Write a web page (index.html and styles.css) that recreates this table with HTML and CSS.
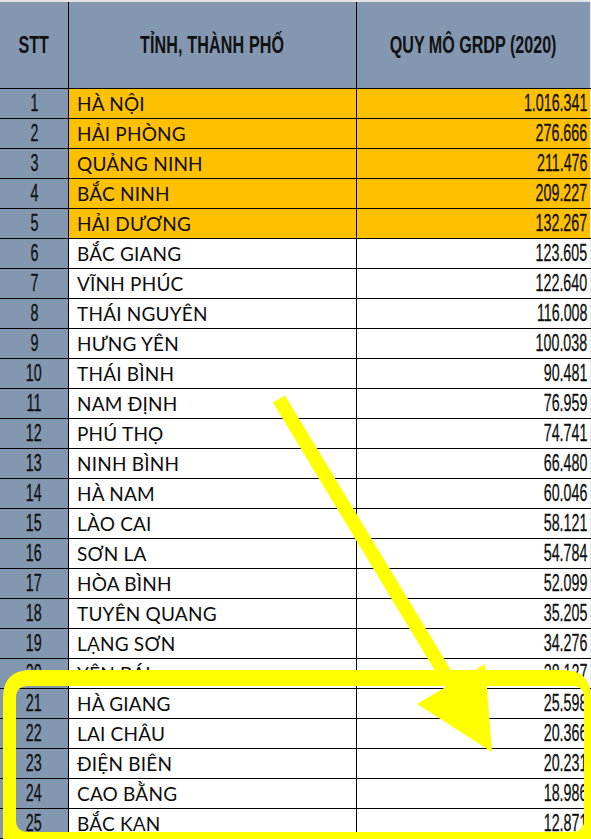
FILE: index.html
```html
<!DOCTYPE html>
<html lang="vi">
<head>
<meta charset="utf-8">
<title>Quy mô GRDP 2020</title>
<link rel="stylesheet" href="styles.css">
</head>
<body>
<div class="page">
  <div class="sheet">
    <div class="row head">
      <div class="cell stt"><span class="hd">STT</span></div>
      <div class="cell name c"><span class="hd">TỈNH, THÀNH PHỐ</span></div>
      <div class="cell val c"><span class="hd">QUY MÔ GRDP (2020)</span></div>
    </div>
    <div class="row hi"><div class="cell stt"><span class="num">1</span></div><div class="cell name">HÀ NỘI</div><div class="cell val"><span class="num r">1.016.341</span></div></div>
    <div class="row hi"><div class="cell stt"><span class="num">2</span></div><div class="cell name">HẢI PHÒNG</div><div class="cell val"><span class="num r">276.666</span></div></div>
    <div class="row hi"><div class="cell stt"><span class="num">3</span></div><div class="cell name">QUẢNG NINH</div><div class="cell val"><span class="num r">211.476</span></div></div>
    <div class="row hi"><div class="cell stt"><span class="num">4</span></div><div class="cell name">BẮC NINH</div><div class="cell val"><span class="num r">209.227</span></div></div>
    <div class="row hi"><div class="cell stt"><span class="num">5</span></div><div class="cell name">HẢI DƯƠNG</div><div class="cell val"><span class="num r">132.267</span></div></div>
    <div class="row"><div class="cell stt"><span class="num">6</span></div><div class="cell name">BẮC GIANG</div><div class="cell val"><span class="num r">123.605</span></div></div>
    <div class="row"><div class="cell stt"><span class="num">7</span></div><div class="cell name">VĨNH PHÚC</div><div class="cell val"><span class="num r">122.640</span></div></div>
    <div class="row"><div class="cell stt"><span class="num">8</span></div><div class="cell name">THÁI NGUYÊN</div><div class="cell val"><span class="num r">116.008</span></div></div>
    <div class="row"><div class="cell stt"><span class="num">9</span></div><div class="cell name">HƯNG YÊN</div><div class="cell val"><span class="num r">100.038</span></div></div>
    <div class="row"><div class="cell stt"><span class="num">10</span></div><div class="cell name">THÁI BÌNH</div><div class="cell val"><span class="num r">90.481</span></div></div>
    <div class="row"><div class="cell stt"><span class="num">11</span></div><div class="cell name">NAM ĐỊNH</div><div class="cell val"><span class="num r">76.959</span></div></div>
    <div class="row"><div class="cell stt"><span class="num">12</span></div><div class="cell name">PHÚ THỌ</div><div class="cell val"><span class="num r">74.741</span></div></div>
    <div class="row"><div class="cell stt"><span class="num">13</span></div><div class="cell name">NINH BÌNH</div><div class="cell val"><span class="num r">66.480</span></div></div>
    <div class="row"><div class="cell stt"><span class="num">14</span></div><div class="cell name">HÀ NAM</div><div class="cell val"><span class="num r">60.046</span></div></div>
    <div class="row"><div class="cell stt"><span class="num">15</span></div><div class="cell name">LÀO CAI</div><div class="cell val"><span class="num r">58.121</span></div></div>
    <div class="row"><div class="cell stt"><span class="num">16</span></div><div class="cell name">SƠN LA</div><div class="cell val"><span class="num r">54.784</span></div></div>
    <div class="row"><div class="cell stt"><span class="num">17</span></div><div class="cell name">HÒA BÌNH</div><div class="cell val"><span class="num r">52.099</span></div></div>
    <div class="row"><div class="cell stt"><span class="num">18</span></div><div class="cell name">TUYÊN QUANG</div><div class="cell val"><span class="num r">35.205</span></div></div>
    <div class="row"><div class="cell stt"><span class="num">19</span></div><div class="cell name">LẠNG SƠN</div><div class="cell val"><span class="num r">34.276</span></div></div>
    <div class="row"><div class="cell stt"><span class="num">20</span></div><div class="cell name">YÊN BÁI</div><div class="cell val"><span class="num r">28.127</span></div></div>
    <div class="row"><div class="cell stt"><span class="num">21</span></div><div class="cell name">HÀ GIANG</div><div class="cell val"><span class="num r">25.598</span></div></div>
    <div class="row"><div class="cell stt"><span class="num">22</span></div><div class="cell name">LAI CHÂU</div><div class="cell val"><span class="num r">20.366</span></div></div>
    <div class="row"><div class="cell stt"><span class="num">23</span></div><div class="cell name">ĐIỆN BIÊN</div><div class="cell val"><span class="num r">20.231</span></div></div>
    <div class="row"><div class="cell stt"><span class="num">24</span></div><div class="cell name">CAO BẰNG</div><div class="cell val"><span class="num r">18.986</span></div></div>
    <div class="row"><div class="cell stt"><span class="num">25</span></div><div class="cell name">BẮC KẠN</div><div class="cell val"><span class="num r">12.871</span></div></div>
  </div>
  <svg class="marks" width="591" height="839" viewBox="0 0 591 839" aria-hidden="true">
    <path fill="#ffff00" fill-rule="evenodd" d="M31 670 H563 Q591 670 591 698 V860 H3 V698 Q3 670 31 670 Z M28 686 H572 Q584 686 584 698 V820 Q584 832 572 832 H28 Q16 832 16 820 V698 Q16 686 28 686 Z"/>
    <line x1="279" y1="399" x2="456" y2="692" stroke="#ffff00" stroke-width="14"/>
    <polygon fill="#ffff00" points="417,704 485,664 492,752"/>
  </svg>
</div>
</body>
</html>
```
FILE: styles.css
```css
html, body {
  margin: 0;
  padding: 0;
  background: #ffffff;
}
.page {
  position: relative;
  width: 591px;
  height: 839px;
  overflow: hidden;
}
.sheet {
  width: 591px;
  border-top: 2px solid #e4e4e4;
}
.row {
  display: grid;
  grid-template-columns: 69px 288px 234px;
  height: 30px;
  box-sizing: border-box;
  border-bottom: 1px solid #000;
  background: #ffffff;
}
.row.head {
  height: 87px;
  background: #8497b0;
}
.row.hi .name,
.row.hi .val {
  background: #ffc000;
}
.cell {
  box-sizing: border-box;
  display: flex;
  align-items: center;
  overflow: hidden;
  white-space: nowrap;
  color: #0d0d0d;
}
.stt {
  background: #8497b0;
  border-right: 1px solid #000;
  justify-content: center;
}
.name {
  border-right: 1px solid #000;
  padding-left: 8px;
  font-family: Lato, "Open Sans", sans-serif;
  font-size: 19px;
  letter-spacing: 0.2px;
}
.val {
  justify-content: flex-end;
  padding-right: 3px;
  border-right: 1px solid #e9e9e9;
}
.head .cell {
  background: #8497b0;
}
.c {
  justify-content: center;
  padding: 0;
}
.hd {
  display: inline-block;
  font-family: "Liberation Sans", Arial, sans-serif;
  font-weight: bold;
  font-size: 23px;
  transform: scaleX(0.7);
  color: #111;
}
.num {
  display: inline-block;
  font-family: "Liberation Sans", Arial, sans-serif;
  font-size: 23px;
  transform: scaleX(0.62);
  transform-origin: center center;
  color: #111;
  -webkit-text-stroke: 0.3px #111;
}
.num.r {
  transform-origin: right center;
}
.marks {
  position: absolute;
  left: 0;
  top: 0;
  pointer-events: none;
}
```
